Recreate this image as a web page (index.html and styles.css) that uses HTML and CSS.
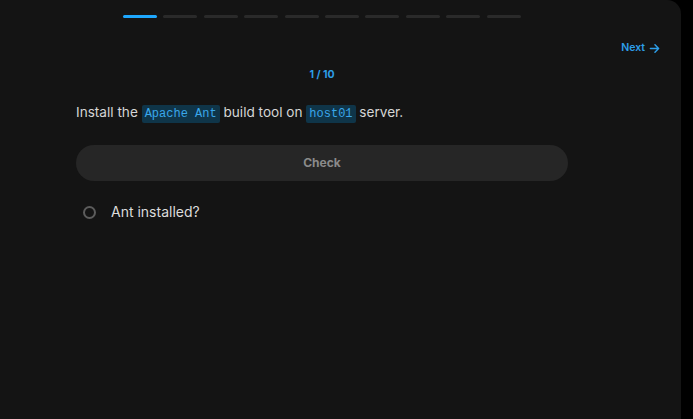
FILE: index.html
```html
<!DOCTYPE html>
<html lang="en">
<head>
<meta charset="utf-8">
<link rel="stylesheet" href="styles.css">
</head>
<body>
<div class="panel">
  <div class="progress">
    <span class="seg active"></span>
    <span class="seg"></span>
    <span class="seg"></span>
    <span class="seg"></span>
    <span class="seg"></span>
    <span class="seg"></span>
    <span class="seg"></span>
    <span class="seg"></span>
    <span class="seg"></span>
    <span class="seg"></span>
  </div>
  <div class="toolbar">
    <button class="next">Next
      <svg width="11" height="11" viewBox="0 0 12 12" fill="none" stroke="currentColor" stroke-width="1.6" stroke-linecap="round" stroke-linejoin="round"><path d="M1.5 6h9M6.5 2l4 4-4 4"/></svg>
    </button>
  </div>
  <div class="content">
    <div class="counter">1 / 10</div>
    <p class="question">Install the <code>Apache Ant</code> build tool on <code>host01</code> server.</p>
    <button class="check">Check</button>
    <div class="task">
      <span class="radio"></span>
      <span class="task-label">Ant installed?</span>
    </div>
  </div>
</div>
</body>
</html>
```

FILE: styles.css
```css
html, body {
  margin: 0;
  padding: 0;
  background: #000;
  height: 100%;
}
body {
  font-family: Inter, "Noto Sans", sans-serif;
}
.panel {
  width: 681px;
  height: 419px;
  background: #141414;
  border-top-right-radius: 14px;
  box-sizing: border-box;
  padding-top: 15px;
}
.progress {
  display: flex;
  gap: 6.4px;
  margin-left: 123px;
}
.seg {
  width: 34px;
  height: 3px;
  border-radius: 2px;
  background: #2a2a2a;
}
.seg.active {
  background: #1ea7fd;
}
.toolbar {
  display: flex;
  justify-content: flex-end;
  padding-right: 21px;
  margin-top: 21px;
}
.next {
  display: flex;
  align-items: center;
  gap: 4px;
  background: none;
  border: 0;
  padding: 0;
  color: #2d9ee8;
  font-family: Inter, sans-serif;
  font-weight: 600;
  font-size: 10.5px;
  line-height: 18px;
}
.content {
  width: 492px;
  margin-left: 76px;
}
.counter {
  text-align: center;
  color: #2d9ee8;
  font-weight: 700;
  font-size: 10.5px;
  line-height: 14px;
  margin-top: 11px;
}
.question {
  margin: 21px 0 0;
  color: #d6d6d6;
  font-size: 13.6px;
  line-height: 18px;
}
code {
  font-family: "Liberation Mono", monospace;
  font-size: 12px;
  color: #3aa7ea;
  background: #0f3549;
  padding: 2px 3px;
  border-radius: 2px;
}
.check {
  display: block;
  width: 100%;
  height: 36px;
  margin-top: 22px;
  padding-bottom: 3px;
  border: 0;
  border-radius: 18px;
  background: #262626;
  color: #8a8a8a;
  font-family: Inter, sans-serif;
  font-weight: 700;
  font-size: 12px;
}
.task {
  display: flex;
  align-items: center;
  margin-top: 22px;
  padding-left: 7px;
}
.radio {
  width: 9px;
  height: 9px;
  border: 2px solid #5c5c5c;
  border-radius: 50%;
}
.task-label {
  margin-left: 15px;
  color: #dcdcdc;
  font-size: 14px;
  line-height: 18px;
}
```
